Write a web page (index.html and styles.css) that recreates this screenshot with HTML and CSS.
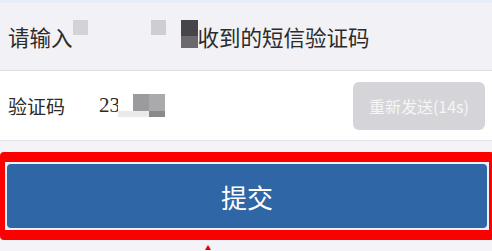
FILE: index.html
```html
<!DOCTYPE html>
<html lang="zh-CN">
  <head>
    <meta charset="UTF-8" />
    <meta name="viewport" content="width=device-width, initial-scale=1.0" />
    <title>短信验证</title>
    <link rel="stylesheet" href="styles.css">
  </head>
  <body>
    <div class="topbar"></div>

    <div class="prompt">
      <span>请输入</span>
      <span class="mask mask-a"></span>
      <span class="mask mask-b"></span>
      <span class="mask mask-c"></span>
      <span>收到的短信验证码</span>
    </div>

    <div class="code-row">
      <span class="label">验证码</span>
      <span class="code">23</span>
      <span class="mask mask-code"></span>
      <button class="resend" disabled>重新发送(14s)</button>
    </div>

    <div class="highlight">
      <button class="submit">提交</button>
    </div>
    <div class="arrow"></div>
  </body>
</html>
```

FILE: styles.css
```css
body {
  margin: 0;
  background-color: #f4f3f7;
  font-family: "Noto Sans CJK SC", "Noto Sans", sans-serif;
  color: #2b2b2b;
}

.topbar {
  height: 3px;
  background-color: #e5eef9;
}

.prompt {
  display: flex;
  align-items: center;
  height: 67px;
  padding: 0 8px;
  font-size: 21.5px;
  background-color: #f2f1f5;
  border-bottom: 1px solid #dedde2;
}

.mask {
  display: inline-block;
}

.mask-a {
  align-self: flex-start;
  margin-top: 17px;
  width: 15px;
  height: 15px;
  background-color: #d3d2d6;
}

.mask-b {
  align-self: flex-start;
  margin: 17px 0 0 63px;
  width: 15px;
  height: 15px;
  background-color: #cfcdd1;
}

.mask-c {
  align-self: flex-start;
  margin: 17px 0 0 15px;
  width: 17px;
  height: 28px;
  background: linear-gradient(#47454a 0, #47454a 16px, #6b696e 16px);
}

.code-row {
  display: flex;
  align-items: center;
  height: 69px;
  padding: 0 7px 0 8px;
  background-color: #fff;
  border-bottom: 1px solid #e3e2e6;
  font-size: 19px;
}

.label {
  width: 91px;
}

.code {
  font-family: "Liberation Serif", serif;
  font-size: 21px;
}

.mask-code {
  width: 47px;
  height: 23px;
  margin: 0 0 0 -2px;
  background:
    linear-gradient(90deg, #eaeaea 0, #eaeaea 31px, #8a898c 31px) bottom / 100% 6px no-repeat,
    linear-gradient(90deg, #fff 0, #fff 15px, #9b9a9d 15px, #9b9a9d 31px, #aaa9ac 31px) top / 100% 17px no-repeat;
}

.resend {
  margin-left: auto;
  width: 132px;
  height: 48px;
  border: none;
  border-radius: 6px;
  background-color: #d5d4d8;
  color: #f6f6f6;
  font-family: inherit;
  font-size: 16px;
}

.highlight {
  margin-top: 11px;
  width: 480px;
  padding: 2px;
  background-color: #eef2f8;
  border-style: solid;
  border-color: #fb0000;
  border-width: 10px 5px;
  border-radius: 4px;
}

.submit {
  display: block;
  width: 100%;
  height: 64px;
  border: none;
  border-radius: 4px;
  background-color: #2f66a6;
  color: #fff;
  font-family: inherit;
  font-size: 26px;
}

.arrow {
  margin: 5px 0 0 205px;
  width: 0;
  height: 0;
  border-left: 3px solid transparent;
  border-right: 3px solid transparent;
  border-bottom: 5px solid #e20000;
}
```
